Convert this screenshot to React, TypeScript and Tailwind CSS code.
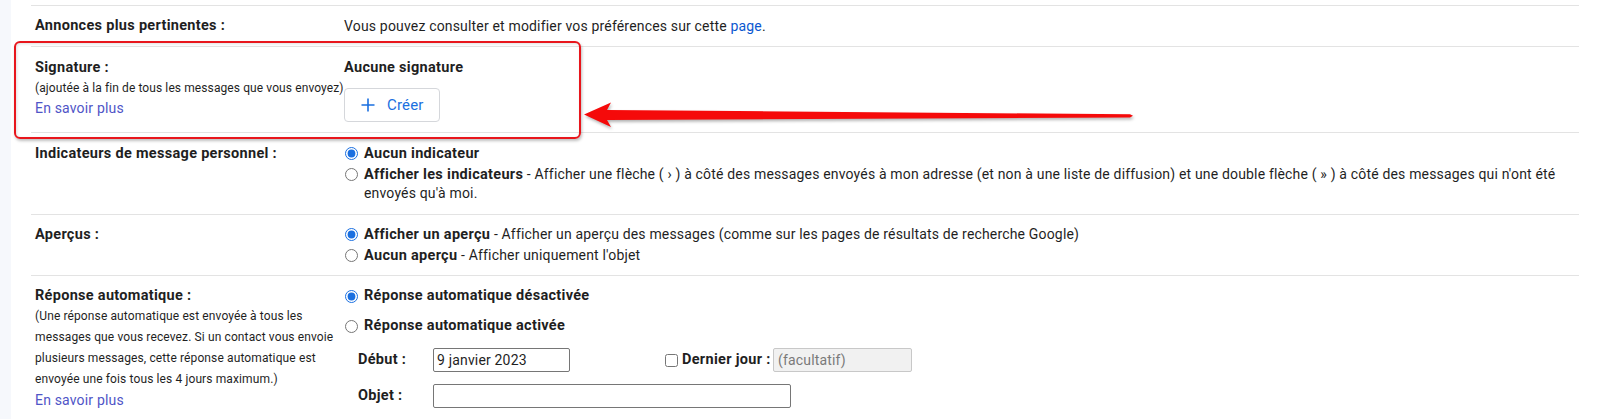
import React from "react";

const B = "font-bold text-[14.5px] tracking-[0.3px]";

function Radio({ checked }: { checked?: boolean }) {
  return (
    <input
      type="radio"
      readOnly
      checked={!!checked}
      className="m-0 w-[13px] h-[13px] shrink-0 accent-[#1a6fe0]"
    />
  );
}

export default function App() {
  return (
    <div className="relative flex w-[1610px] h-[419px] overflow-hidden bg-white font-['Roboto',_'Noto_Sans',_sans-serif] text-[14px] leading-[20px] tracking-[0.17px] text-[#1f1f1f]">
      <div className="w-[11px] shrink-0 bg-[#f6f8fc]" />
      <div className="ml-[20px] w-[1548px] pt-[5px]">
        {/* Annonces */}
        <div className="flex border-t border-[#e3e3e3] pt-[10px] pb-[10px]">
          <div className={`w-[313px] shrink-0 pl-[4px] ${B}`}>Annonces plus pertinentes :</div>
          <div>
            Vous pouvez consulter et modifier vos préférences sur cette{" "}
            <span className="text-[#0b57d0]">page</span>.
          </div>
        </div>
        {/* Signature */}
        <div className="flex border-t border-[#e3e3e3] pt-[11px] pb-[10px]">
          <div className="w-[313px] shrink-0 pl-[4px]">
            <div className={B}>Signature :</div>
            <div className="text-[12px] leading-[20px] tracking-[0.1px] whitespace-nowrap">
              (ajoutée à la fin de tous les messages que vous envoyez)
            </div>
            <div className="text-[#4f55c7]">En savoir plus</div>
          </div>
          <div>
            <div className={B}>Aucune signature</div>
            <div className="mt-[10px] flex h-[34px] w-[96px] items-center rounded-[4px] border border-[#d5d7db] pl-[15px] text-[#1a6fe0]">
              <svg width="16" height="16" viewBox="0 0 16 16" className="shrink-0">
                <path d="M8 1.5v13M1.5 8h13" stroke="#1a6fe0" strokeWidth="1.6" fill="none" />
              </svg>
              <span className="ml-[11px] text-[15px]">Créer</span>
            </div>
          </div>
        </div>
        {/* Indicateurs */}
        <div className="flex border-t border-[#e3e3e3] pt-[11px] pb-[11px]">
          <div className={`w-[313px] shrink-0 pl-[4px] ${B}`}>Indicateurs de message personnel :</div>
          <div className="flex flex-col gap-[2px] pl-[1px] leading-[19px]">
            <div className="flex items-center gap-[6px]">
              <Radio checked />
              <span className={B}>Aucun indicateur</span>
            </div>
            <div className="flex items-start gap-[6px]">
              <div className="flex h-[19px] items-center">
                <Radio />
              </div>
              <span>
                <b className={B}>Afficher les indicateurs</b> - Afficher une flèche ( › ) à côté des messages envoyés à mon adresse (et non à une liste de diffusion) et une double flèche ( » ) à côté des messages qui n'ont été
                <br />
                envoyés qu'à moi.
              </span>
            </div>
          </div>
        </div>
        {/* Aperçus */}
        <div className="flex border-t border-[#e3e3e3] pt-[10px] pb-[10px]">
          <div className={`w-[313px] shrink-0 pl-[4px] ${B}`}>Aperçus :</div>
          <div className="flex flex-col gap-[2px] pl-[1px] leading-[19px]">
            <div className="flex items-center gap-[6px]">
              <Radio checked />
              <span>
                <b className={B}>Afficher un aperçu</b> - Afficher un aperçu des messages (comme sur les pages de résultats de recherche Google)
              </span>
            </div>
            <div className="flex items-center gap-[6px]">
              <Radio />
              <span>
                <b className={B}>Aucun aperçu</b> - Afficher uniquement l'objet
              </span>
            </div>
          </div>
        </div>
        {/* Réponse automatique */}
        <div className="flex border-t border-[#e3e3e3] pt-[10px]">
          <div className="w-[313px] shrink-0 pl-[4px]">
            <div className={B}>Réponse automatique :</div>
            <div className="text-[12px] leading-[21px] tracking-[0.12px]">
              (Une réponse automatique est envoyée à tous les
              <br />
              messages que vous recevez. Si un contact vous envoie
              <br />
              plusieurs messages, cette réponse automatique est
              <br />
              envoyée une fois tous les 4 jours maximum.)
            </div>
            <div className="text-[#4f55c7]">En savoir plus</div>
          </div>
          <div className="pl-[1px]">
            <div className="flex items-center gap-[6px]">
              <Radio checked />
              <span className={B}>Réponse automatique désactivée</span>
            </div>
            <div className="mt-[10px] flex items-center gap-[6px]">
              <Radio />
              <span className={B}>Réponse automatique activée</span>
            </div>
            <div className="mt-[12px] flex items-center pl-[13px]">
              <span className={`w-[75px] ${B}`}>Début :</span>
              <div className="flex h-[24px] w-[137px] items-center rounded-[2px] border border-[#767676] pl-[3px]">
                9 janvier 2023
              </div>
              <input type="checkbox" readOnly className="ml-[95px] m-0 h-[13px] w-[13px] accent-[#1a6fe0]" />
              <span className={`ml-[4px] w-[91px] ${B}`}>Dernier jour :</span>
              <div className="flex h-[24px] w-[139px] items-center rounded-[2px] border border-[#c8c8c8] bg-[#f1f1f1] pl-[4px] text-[#7a7a7a]">
                (facultatif)
              </div>
            </div>
            <div className="mt-[12px] flex items-center pl-[13px]">
              <span className={`w-[75px] ${B}`}>Objet :</span>
              <div className="h-[24px] w-[358px] rounded-[2px] border border-[#767676]" />
            </div>
          </div>
        </div>
      </div>

      {/* Annotation: red box */}
      <div className="absolute left-[14px] top-[41px] h-[98px] w-[567px] rounded-[6px] border-2 border-[#e8161c] shadow-[inset_1px_1px_3px_rgba(0,0,0,0.12),1px_2px_3px_rgba(0,0,0,0.25)]" />
      {/* Annotation: arrow */}
      <svg
        className="absolute left-0 top-0"
        width="1610"
        height="419"
        viewBox="0 0 1610 419"
        style={{ filter: "drop-shadow(1px 2px 1.5px rgba(0,0,0,0.3))" }}
      >
        <polygon
          points="584,114.5 611,102.5 607,110 1130,114.3 1133,115.8 1130,117.5 607,120 611,127"
          fill="#f50a0a"
        />
      </svg>
    </div>
  );
}
